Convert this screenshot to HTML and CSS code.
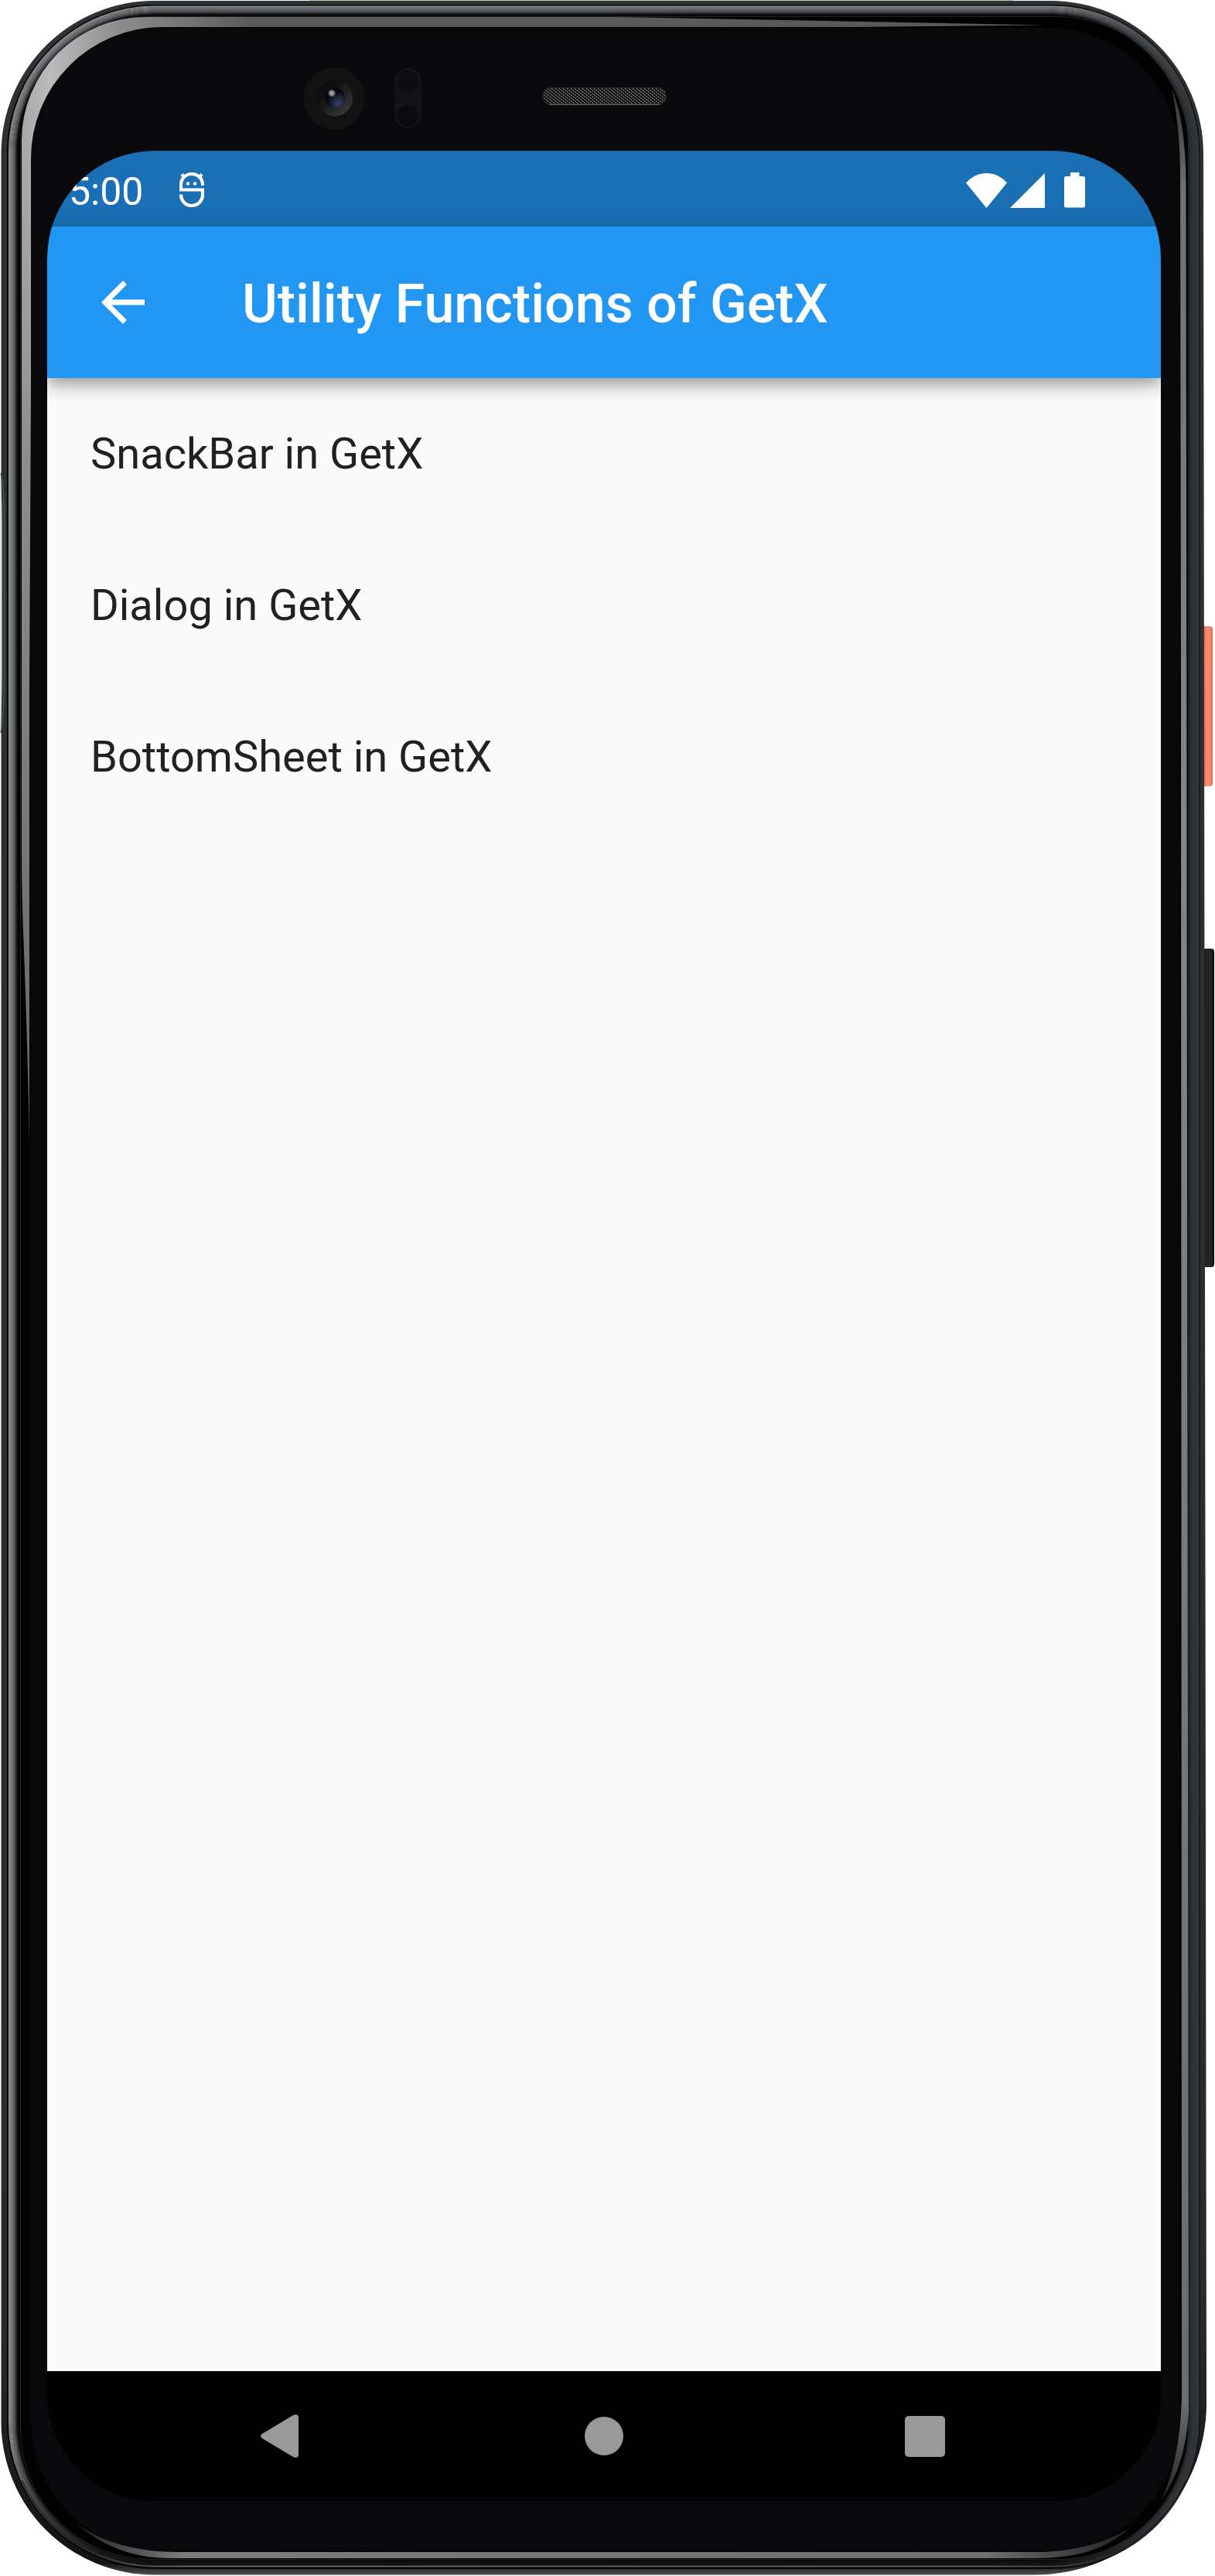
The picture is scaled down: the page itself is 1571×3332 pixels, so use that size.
FILE: index.html
```html
<!DOCTYPE html>
<html lang="en">
<head>
<meta charset="utf-8">
<title>Utility Functions of GetX</title>
<link rel="stylesheet" href="styles.css">
</head>
<body>
<div class="phone">
  <svg class="phone-frame" viewBox="0 0 1571 3332" aria-hidden="true">
    <defs>
      <linearGradient id="shell" gradientUnits="userSpaceOnUse" x1="0" y1="0" x2="0" y2="3332">
        <stop offset="0" stop-color="#303231"/><stop offset=".9" stop-color="#2a2a2a"/><stop offset=".985" stop-color="#151515"/><stop offset=".995" stop-color="#141414"/><stop offset="1" stop-color="#555"/>
      </linearGradient>
      <linearGradient id="shade" gradientUnits="userSpaceOnUse" x1="1350" y1="0" x2="1545" y2="0">
        <stop offset="0" stop-color="#2b2d30" stop-opacity="0"/><stop offset="1" stop-color="#2b2d30" stop-opacity=".92"/>
      </linearGradient>
      <linearGradient id="fade" gradientUnits="userSpaceOnUse" x1="0" y1="3160" x2="0" y2="3318">
        <stop offset="0" stop-color="#fff"/><stop offset="1" stop-color="#222"/>
      </linearGradient>
      <mask id="bandMask" maskUnits="userSpaceOnUse" x="0" y="0" width="1571" height="3332"><rect width="1571" height="3332" fill="url(#fade)"/></mask>
      <radialGradient id="glow" gradientUnits="userSpaceOnUse" cx="0" cy="0" r="1" gradientTransform="translate(65 85) scale(260 1600)">
        <stop offset="0" stop-color="#bcbcbc"/><stop offset=".35" stop-color="#8c8c8c"/><stop offset=".7" stop-color="#727272"/><stop offset="1" stop-color="#5a5a5a"/>
      </radialGradient>
      <linearGradient id="rightGlow" gradientUnits="userSpaceOnUse" x1="0" y1="120" x2="0" y2="3235">
        <stop offset="0" stop-color="#333"/><stop offset=".04" stop-color="#707070"/><stop offset=".3" stop-color="#858585"/><stop offset=".96" stop-color="#6c6c6c"/><stop offset="1" stop-color="#222"/>
      </linearGradient>
      <linearGradient id="bottomGlow" gradientUnits="userSpaceOnUse" x1="100" y1="0" x2="1480" y2="0">
        <stop offset="0" stop-color="#222"/><stop offset=".1" stop-color="#7c7c7c"/><stop offset=".85" stop-color="#707070"/><stop offset="1" stop-color="#181818"/>
      </linearGradient>
      <linearGradient id="ring" x1="0" y1="0" x2="1" y2="1"><stop offset=".3" stop-color="#0e0e0f"/><stop offset="1" stop-color="#404042"/></linearGradient>
      <radialGradient id="lens" cx=".68" cy=".78" r=".6"><stop offset="0" stop-color="#35426b"/><stop offset="1" stop-color="#08080b"/></radialGradient>
      <radialGradient id="glint"><stop offset="0" stop-color="#aaa"/><stop offset=".4" stop-color="#999"/><stop offset="1" stop-color="#999" stop-opacity="0"/></radialGradient>
      <linearGradient id="power" x1="0" y1="0" x2="1" y2="0"><stop offset="0" stop-color="#c94a34"/><stop offset=".2" stop-color="#ee6f55"/><stop offset=".5" stop-color="#f48d75"/><stop offset=".8" stop-color="#f2856c"/><stop offset="1" stop-color="#ec5f44"/></linearGradient>
      <linearGradient id="volume" x1="0" y1="0" x2="1" y2="0"><stop offset="0" stop-color="#0c0c0c"/><stop offset=".3" stop-color="#222322"/><stop offset=".75" stop-color="#232423"/><stop offset="1" stop-color="#080808"/></linearGradient>
      <pattern id="mesh" width="5" height="4" patternUnits="userSpaceOnUse"><rect width="5" height="4" fill="#0d0d0d"/><path d="M.5 0l1.500 2M3 2l1.500 2" stroke="#8a8a8a" stroke-width="1.200"/></pattern>
    </defs>
    <!-- side buttons -->
    <rect x="1554" y="810" width="14" height="207" rx="4" fill="url(#power)"/>
    <rect x="1555" y="1227" width="15" height="412" rx="4" fill="url(#volume)"/>
    <!-- outer shell and polished metal band -->
    <path d="M1.500 199A198 198 0 0 1 200 1H1358A198 198 0 0 1 1556 199L1560 3108A222 222 0 0 1 1338 3330.500H200A198 198 0 0 1 1.500 3132Z" fill="url(#shell)"/>
    <path d="M400 .5H1310" stroke="#c3cbc5"/>
    <path d="M1 612Q5.500 630 5.500 680V870Q5.500 920 1 948" fill="none" stroke="#4b5450" stroke-width="1.500"/>
    <path d="M0 612Q2.500 630 2.500 680V870Q2.500 920 0 948" fill="#dfe4e1"/>
    <rect x="9" y="6" width="1542.500" height="3317" rx="191" fill="#050506"/>
    <g fill="none" stroke-width="2.200" mask="url(#bandMask)">
      <rect x="12" y="8.500" width="1537" height="3312" rx="188" stroke="#85878b"/>
      <rect x="14" y="10.500" width="1533" height="3308" rx="186" stroke="#7d7f83"/>
      <rect x="16" y="12.500" width="1529" height="3304" rx="184" stroke="#6d6f73"/>
      <rect x="18" y="14.500" width="1525" height="3300" rx="182" stroke="#5d5f63"/>
      <rect x="20" y="16.500" width="1521" height="3296" rx="180" stroke="#3e3f42"/>
      <rect x="22" y="18.500" width="1517" height="3292" rx="178" stroke="#151516"/>
    </g>
    <rect x="16" y="13" width="1528" height="3304" rx="184" fill="none" stroke="url(#shade)" stroke-width="13"/>
    <rect x="12" y="9" width="1538" height="3310.500" rx="188" fill="none" stroke="url(#bottomGlow)" stroke-width="1.500" clip-path="inset(3200px 0 0 0)"/>
    <!-- glass -->
    <rect x="24" y="20" width="1512" height="3291" rx="172" fill="#020203"/>
    <rect x="26.500" y="21.500" width="1510" height="3289" rx="168" fill="none" stroke="#242424"/>
    <rect x="40" y="36" width="1485" height="3264" rx="168" fill="#09090b"/>
    <path d="M28 182A160 160 0 0 1 188 22H800L960 25L1350 32.500L1100 35H210A170 170 0 0 0 40 206V500L38 900V1480Q36.500 1380 31 1230Q28 1160 28 1100Z" fill="url(#glow)"/>
    <path d="M1515 115Q1533 155 1533.500 240L1535 1500L1537 3120Q1533 3190 1502 3233Q1526 3180 1528 3100L1527 900L1526 220Q1525 160 1515 115Z" fill="url(#rightGlow)"/>
    <path d="M100 3265Q150 3301 230 3301H1350Q1415 3298 1460 3270Q1420 3309 1340 3309H220Q150 3309 100 3265Z" fill="url(#bottomGlow)"/>
    <!-- front camera, sensors, earpiece -->
    <circle cx="432" cy="127.500" r="40" fill="#121213"/>
    <circle cx="432.500" cy="127" r="23.500" fill="url(#ring)"/>
    <circle cx="433" cy="126.500" r="13" fill="url(#lens)"/>
    <circle cx="429" cy="120.500" r="5.500" fill="url(#glint)"/>
    <rect x="510" y="88" width="35" height="78" rx="17.500" fill="#131315"/>
    <circle cx="527.500" cy="105" r="14" fill="#0d0d0f"/>
    <circle cx="527.500" cy="150" r="14" fill="#0b0b0d"/>
    <rect x="701.500" y="113.500" width="160" height="22" rx="11" fill="url(#mesh)" stroke="#2a2a2a"/>
    <path d="M710 135.300H853" stroke="#606060" stroke-width="1.300"/>
  </svg>

  <main class="screen">
    <div class="status-bar">
      <span class="clock">5:00</span>
      <svg class="debug-icon" viewBox="0 0 32 46" fill="none" stroke="#fff" stroke-width="4.200">
        <path d="M30 17V16A14 14 0 0 0 2 16V22.500H30V29A14 14 0 0 1 2 29V28.500"/>
        <path d="M3 2.500L7 6.500M29 2.500L25 6.500"/>
        <circle cx="11" cy="14.500" r="2.200" fill="#fff" stroke="none"/><circle cx="20" cy="14.500" r="2.200" fill="#fff" stroke="none"/>
      </svg>
      <svg class="wifi-icon" viewBox="0 0 53 45" fill="#fff"><path d="M26.500 45L0 12.500Q11 0 26.500 0T53 12.500Z"/></svg>
      <svg class="signal-icon" viewBox="0 0 45 45" fill="#fff"><path d="M0 45L45 0V45Z"/></svg>
      <svg class="battery-icon" viewBox="0 0 27 46" fill="#fff"><path d="M8 0H19.500V5H24.500Q27 5 27 7.500V43Q27 45.500 24.500 45.500H2.500Q0 45.500 0 43V7.500Q0 5 2.500 5H8Z"/></svg>
    </div>
    <header class="app-bar">
      <svg class="back-icon" viewBox="0 0 24 24" fill="#fff"><path d="M20 11H7.830l5.590-5.590L12 4l-8 8 8 8 1.410-1.410L7.830 13H20v-2z"/></svg>
      <h1 class="title">Utility Functions of GetX</h1>
    </header>
    <ul class="list">
      <li class="tile">SnackBar in GetX</li>
      <li class="tile">Dialog in GetX</li>
      <li class="tile">BottomSheet in GetX</li>
    </ul>
    <nav class="nav-bar">
      <svg class="nav-back" viewBox="0 0 49 56"><path d="M2 25Q-2 28 2 31L43 55.500Q49 57 49 52V4Q49-1 43 .5Z" fill="#999"/></svg>
      <span class="nav-home"></span>
      <span class="nav-recent"></span>
    </nav>
  </main>
</div>
</body>
</html>
```

FILE: styles.css
```css
body {
  margin: 0;
  background: #fff;
  font-family: Roboto, "Liberation Sans", sans-serif;
}

.phone {
  position: relative;
  box-sizing: border-box;
  width: 1571px;
  height: 3332px;
  padding: 195px 70px 97px 61px;
  overflow: hidden;
}

.phone-frame {
  position: absolute;
  inset: 0;
  width: 1571px;
  height: 3332px;
}

.screen {
  position: relative;
  display: flex;
  flex-direction: column;
  height: 3040px;
  border-radius: 139px;
  overflow: hidden;
  background: #000;
}

.status-bar {
  flex: none;
  box-sizing: border-box;
  display: flex;
  align-items: center;
  height: 98px;
  padding: 4px 98px 0 28px;
  background: #1a6fb5;
  color: #fff;
}

.clock {
  width: 143px;
  padding-top: 3px;
  font-size: 50px;
  line-height: 58px;
}

.debug-icon { width: 32px; height: 46px; }
.wifi-icon { width: 53px; height: 45px; margin: 0 4px 0 auto; }
.signal-icon { width: 45px; height: 45px; margin-right: 25px; }
.battery-icon { width: 27px; height: 46px; }

.app-bar {
  flex: none;
  position: relative;
  z-index: 1;
  display: flex;
  align-items: center;
  height: 196px;
  background: #2196f3;
  box-shadow: 0 7px 14px -3.5px rgba(0, 0, 0, .2), 0 14px 17.5px rgba(0, 0, 0, .14), 0 3.5px 35px rgba(0, 0, 0, .12);
  color: #fff;
}

.back-icon {
  width: 84px;
  height: 84px;
  margin: 0 112px 0 56px;
}

.title {
  margin: 0;
  padding-top: 3px;
  font-size: 70px;
  font-weight: 500;
  line-height: 82px;
  white-space: nowrap;
}

.list {
  flex: 1;
  margin: 0;
  padding: 0;
  background: #fafafa;
  list-style: none;
}

.tile {
  display: flex;
  align-items: center;
  height: 196px;
  padding: 0 56px;
  color: #212121;
  font-size: 56px;
}

.nav-bar {
  flex: none;
  display: flex;
  align-items: center;
  height: 168px;
  padding-left: 276px;
  background: #000;
}

.nav-back { width: 49px; height: 56px; }

.nav-home {
  width: 50px;
  height: 50px;
  margin: 0 364px 0 370px;
  border-radius: 50%;
  background: #999;
}

.nav-recent {
  width: 52px;
  height: 53px;
  border-radius: 5px;
  background: #999;
}
```
